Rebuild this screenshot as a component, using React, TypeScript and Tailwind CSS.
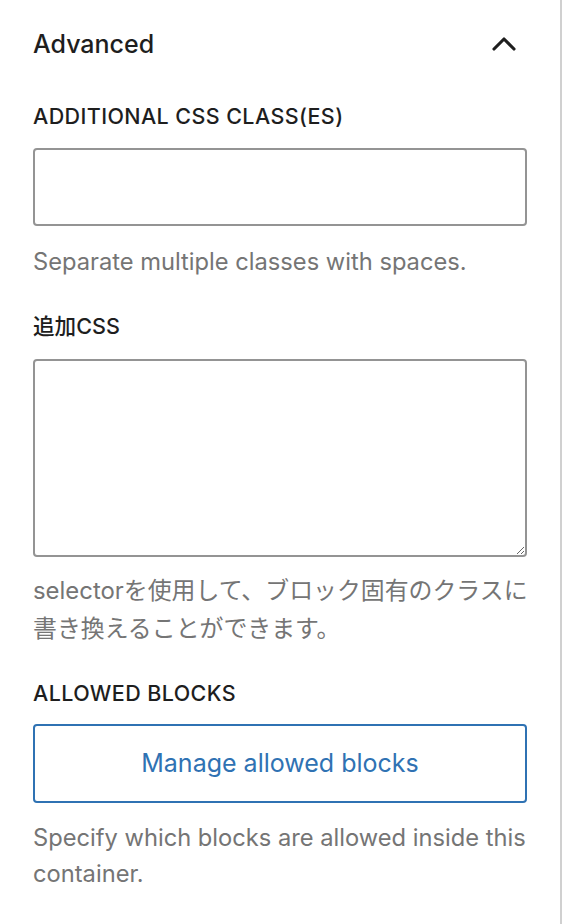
import { ChevronUp } from "lucide-react"

const font = { fontFamily: 'Inter, "Noto Sans CJK JP", sans-serif' }

function Help({ children, className = "" }: { children: React.ReactNode; className?: string }) {
  return <p className={`text-[23.7px] leading-[36px] text-[#757575] ${className}`}>{children}</p>
}

function FieldLabel({ children, className = "" }: { children: React.ReactNode; className?: string }) {
  return (
    <label className={`block text-[21.5px] leading-[28px] font-medium uppercase tracking-[0.4px] text-[#1e1e1e] ${className}`}>
      {children}
    </label>
  )
}

export default function App() {
  return (
    <div className="w-[562px] h-[924px] bg-white border-r-2 border-[#d0d0d0] overflow-hidden" style={font}>
      <div className="px-[33px]">
        {/* Panel header */}
        <div className="flex items-center justify-between pt-[28px] h-[60px]">
          <h2 className="text-[25px] leading-[32px] font-medium text-[#1e1e1e]">Advanced</h2>
          <ChevronUp className="w-[40px] h-[40px] text-[#1e1e1e] mr-[3px]" strokeWidth={1.9} />
        </div>

        {/* Additional CSS classes */}
        <FieldLabel className="mt-[42px]">Additional CSS class(es)</FieldLabel>
        <input
          type="text"
          className="block mt-[18px] w-full h-[78px] rounded-[4px] border-2 border-[#949494] bg-white outline-none"
        />
        <Help className="mt-[18px]">Separate multiple classes with spaces.</Help>

        {/* Custom CSS */}
        <label className="block mt-[32px] text-[21.6px] leading-[28px] font-medium text-[#1e1e1e]">追加CSS</label>
        <textarea className="block mt-[19px] w-full h-[198px] rounded-[4px] border-2 border-[#949494] bg-white outline-none" />
        <p className="mt-[15px] text-[23.9px] leading-[38px] text-[#757575] whitespace-nowrap">
          selectorを使用して、ブロック固有のクラスに
          <br />
          書き換えることができます。
        </p>

        {/* Allowed blocks */}
        <FieldLabel className="mt-[31px]">Allowed blocks</FieldLabel>
        <button className="block mt-[17px] w-full h-[79px] rounded-[4px] border-2 border-[#2f72b3] text-[25px] text-[#2f72b3] bg-white">
          Manage allowed blocks
        </button>
        <Help className="mt-[17px]">Specify which blocks are allowed inside this container.</Help>
      </div>
    </div>
  )
}
